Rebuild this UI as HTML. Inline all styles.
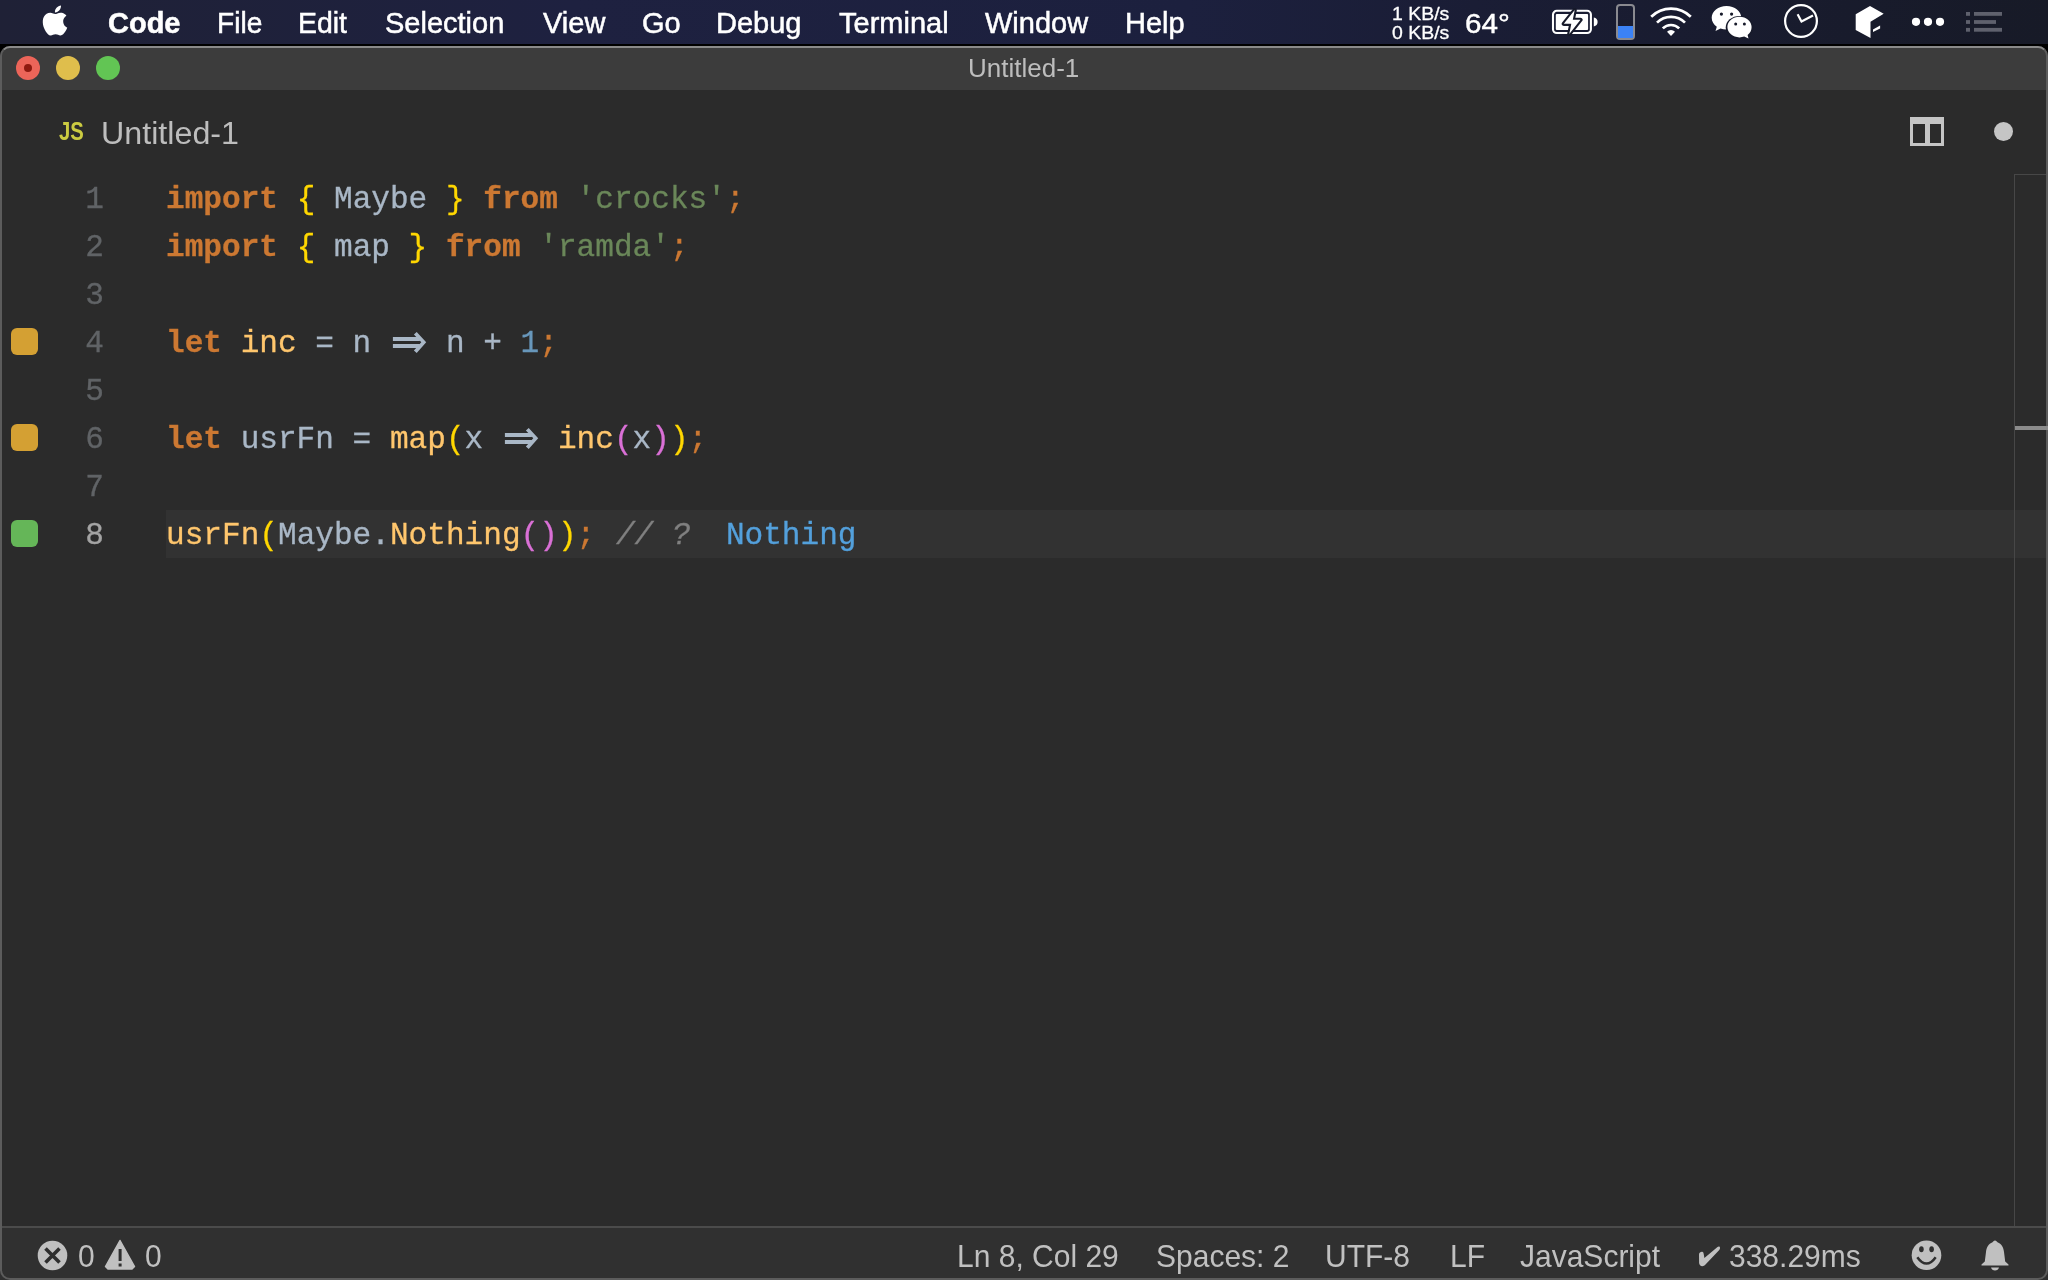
<!DOCTYPE html>
<html><head><meta charset="utf-8">
<style>
*{margin:0;padding:0;box-sizing:border-box}
html,body{width:2048px;height:1280px;overflow:hidden;background:#000}
body{position:relative;will-change:transform;font-family:"Liberation Sans",sans-serif}
.a{position:absolute;white-space:pre}
#menubar{position:absolute;left:0;top:0;width:2048px;height:44px;background:linear-gradient(90deg,#1f2136 0%,#1e2140 28%,#1c203e 58%,#1a1d35 72%,#171a27 100%)}
.mi{position:absolute;color:#fff;font-size:29px;line-height:29px;top:9px;transform-origin:0 0;-webkit-text-stroke:0.5px #fff}
#winbg{position:absolute;left:0;top:46px;width:2048px;height:1234px;border-radius:10px;background:#2b2b2b}
#winborder{position:absolute;left:0;top:46px;width:2048px;height:1234px;border:2px solid #5c5c5c;border-top-color:#8a8a8a;border-radius:10px}
#titlebar{position:absolute;left:0;top:46px;width:2048px;height:44px;background:#3c3c3c;border-radius:10px 10px 0 0}
.tl{position:absolute;border-radius:50%;width:24px;height:24px;top:10px}
.code{position:absolute;left:166px;font-family:"Liberation Mono",monospace;font-size:31.1px;line-height:48px;white-space:pre;color:#a9b7c6}
.ln{position:absolute;left:60px;width:44px;text-align:right;font-family:"Liberation Mono",monospace;font-size:31.1px;line-height:48px;color:#606366}
.k{color:#cc7832;font-weight:bold}
.f{color:#ffc66d}
.s{color:#6a8759}
.n{color:#6897bb}
.g{color:#ffd700}
.o{color:#da70d6}
.sc{color:#cc7832}
.cm{color:#808080;font-style:italic;position:relative;left:2px}
.q{color:#53a0dc}
.sb{position:absolute;color:#c0c0c0;font-size:30px;line-height:30px;top:1242px;transform-origin:0 25px;transform:scaleY(1.06)}
.sq{position:absolute;left:10.5px;width:27px;height:27.2px;border-radius:6px}
#curline{position:absolute;left:166px;top:510px;width:1880px;height:48px;background:#323232}
.ar{position:relative;display:inline-block;width:37.34px;color:transparent}
.ar svg{position:absolute;left:0;top:0px}
#ruler{position:absolute;left:2014px;top:175px;width:1px;height:1052px;background:#474747}
#rulertop{position:absolute;left:2014px;top:174px;width:34px;height:1px;background:#474747}
#rulermark{position:absolute;left:2015px;top:426px;width:33px;height:4px;background:#8b8b8b;z-index:5}
#statusbar{position:absolute;left:0;top:1226px;width:2048px;height:54px;background:#303030;border-top:2px solid #4b4b4b}
.cl{height:48px;transform:scaleY(1.02);transform-origin:0 32px;-webkit-text-stroke:0.3px currentColor}
</style></head><body>
<div id="menubar">
  <svg class="a" style="left:40px;top:4px" width="30" height="33" viewBox="0 0 24 24"><path fill="#fff" d="M12.152 6.896c-.948 0-2.415-1.078-3.96-1.04-2.04.027-3.91 1.183-4.961 3.014-2.117 3.675-.546 9.103 1.519 12.09 1.013 1.454 2.208 3.09 3.792 3.039 1.52-.065 2.09-.987 3.935-.987 1.831 0 2.35.987 3.96.948 1.637-.026 2.676-1.48 3.676-2.948 1.156-1.688 1.636-3.325 1.662-3.415-.039-.013-3.182-1.221-3.22-4.857-.026-3.04 2.48-4.494 2.597-4.559-1.429-2.09-3.623-2.324-4.39-2.376-2-.156-3.675 1.09-4.61 1.09zM15.53 3.83c.843-1.012 1.4-2.427 1.245-3.83-1.207.052-2.662.805-3.532 1.818-.78.896-1.454 2.338-1.273 3.714 1.338.104 2.715-.688 3.559-1.701"/></svg>
  <div class="mi" style="left:108px;font-weight:bold">Code</div>
  <div class="mi" style="left:217px;transform:scaleX(0.97)">File</div>
  <div class="mi" style="left:298px;transform:scaleX(0.98)">Edit</div>
  <div class="mi" style="left:385px">Selection</div>
  <div class="mi" style="left:543px">View</div>
  <div class="mi" style="left:642px">Go</div>
  <div class="mi" style="left:716px">Debug</div>
  <div class="mi" style="left:839px">Terminal</div>
  <div class="mi" style="left:985px">Window</div>
  <div class="mi" style="left:1125px">Help</div>
  <div class="a" style="left:1392px;top:5px;color:#fff;font-size:18px;line-height:19px;transform:scaleX(1.08);transform-origin:0 0;-webkit-text-stroke:0.3px #fff">1 KB/s<br>0 KB/s</div>
  <div class="a" style="left:1465px;top:9px;color:#fff;font-size:28px;line-height:30px;transform:scaleX(1.06);transform-origin:0 0;-webkit-text-stroke:0.4px #fff">64°</div>
<svg class="a" style="left:1550px;top:8px" width="50" height="28" viewBox="0 0 50 28"><rect x="3" y="2.8" width="37.9" height="22.2" rx="3.8" fill="none" stroke="#fff" stroke-width="2.1"/><rect x="5.8" y="5.9" width="32.3" height="16" rx="1" fill="#fff"/><path d="M43.8 9.6Q47.6 10.4 47.6 14Q47.6 17.6 43.8 18.4Z" fill="#fff"/><path d="M24.7 2.1L13.8 15.8H21.3L19.3 25.9L30.5 11.8H22.8Z" fill="#171a2a" stroke="#171a2a" stroke-width="4.2" stroke-linejoin="round"/><path d="M24.7 2.1L13.8 15.8H21.3L19.3 25.9L30.5 11.8H22.8Z" fill="#fff"/></svg>
<div class="a" style="left:1616px;top:4px;width:19px;height:36px;border:2px solid #8a8a90;border-radius:4px"><div style="position:absolute;left:0;right:0;bottom:0;height:12px;background:#3b82f6"></div></div>
<svg class="a" style="left:1648px;top:4px" width="46" height="36" viewBox="0 0 46 36"><g fill="none" stroke="#fff" stroke-width="2.7" stroke-linecap="butt"><path d="M3.2 12.8A28 28 0 0 1 42.8 12.8"/><path d="M9 18.6A19.8 19.8 0 0 1 37 18.6"/><path d="M14.8 24.4A11.6 11.6 0 0 1 31.2 24.4"/></g><path d="M19 27.7A5.6 5.6 0 0 1 27 27.7L23 32Z" fill="#fff"/></svg>
<svg class="a" style="left:1710px;top:4px" width="44" height="36" viewBox="0 0 44 36"><path d="M16.5 2C8.2 2 1.7 7.2 1.7 13.8C1.7 17.5 3.7 20.6 6.8 22.8L5.5 27L10.5 24.5C12.4 25.1 14.4 25.5 16.5 25.5C24.8 25.5 31.3 20.3 31.3 13.8C31.3 7.2 24.8 2 16.5 2Z" fill="#fff"/><ellipse cx="29.5" cy="23.5" rx="13.8" ry="11.6" fill="#171a2a"/><path d="M29.5 12.8C22.8 12.8 17.4 17.4 17.4 23.1C17.4 28.8 22.8 33.4 29.5 33.4C31.2 33.4 32.8 33.1 34.2 32.6L38.5 34.5L37.6 31C40.3 29.1 41.6 26.2 41.6 23.1C41.6 17.4 36.2 12.8 29.5 12.8Z" fill="#fff"/><circle cx="11.4" cy="10.1" r="1.6" fill="#171a2a"/><circle cx="21.6" cy="10.1" r="1.6" fill="#171a2a"/><circle cx="25.7" cy="20" r="1.5" fill="#171a2a"/><circle cx="34.4" cy="20" r="1.5" fill="#171a2a"/></svg>
<svg class="a" style="left:1782px;top:2px" width="38" height="38" viewBox="0 0 38 38"><circle cx="19" cy="19" r="15.9" fill="none" stroke="#fff" stroke-width="2.2"/><path d="M15.6 12.3L19.5 19.5L31 13.5" fill="none" stroke="#fff" stroke-width="2.2"/></svg>
<svg class="a" style="left:1852px;top:4px" width="36" height="36" viewBox="0 0 36 36"><path d="M18 2L31.7 9.7L18.5 17.8V34.1L3.7 26V10.2Z" fill="#fff"/><path d="M21 25.5L28.1 21.4V24.4L21 28Z" fill="#fff"/></svg>
<svg class="a" style="left:1910px;top:15px" width="36" height="14" viewBox="0 0 36 14"><circle cx="6" cy="6.8" r="4.1" fill="#fff"/><circle cx="18" cy="6.8" r="4.1" fill="#fff"/><circle cx="30" cy="6.8" r="4.1" fill="#fff"/></svg>
<svg class="a" style="left:1964px;top:10px" width="40" height="24" viewBox="0 0 40 24"><g fill="#5f616d"><rect x="2" y="2" width="4" height="3.8"/><rect x="2" y="10.1" width="4" height="3.8"/><rect x="2" y="17.9" width="4" height="3.8"/><rect x="10" y="2" width="28" height="3.8"/><rect x="10" y="10.1" width="22" height="3.8"/><rect x="10" y="17.9" width="28" height="3.8"/></g></svg>
</div>
<div id="winbg"></div>
<div id="titlebar"></div>
<div class="tl" style="left:16px;top:56px;background:#ec6559"><div style="position:absolute;left:8px;top:8px;width:8px;height:8px;border-radius:50%;background:#8e1a10"></div></div>
<div class="tl" style="left:56px;top:56px;background:#dfbe4c"></div>
<div class="tl" style="left:96px;top:56px;background:#62c554"></div>
<div class="a" style="left:968px;top:56px;color:#bdbdbd;font-size:25px;line-height:25px;transform:scaleX(1.04);transform-origin:0 0">Untitled-1</div>
<div class="a" style="left:59px;top:118px;color:#cbcb41;font-size:26px;font-weight:bold;line-height:26px;transform:scaleX(0.78);transform-origin:0 0">JS</div>
<div class="a" style="left:101px;top:118px;color:#bdbdbd;font-size:31px;line-height:31px;transform:scaleX(1.04);transform-origin:0 0">Untitled-1</div>
<div id="curline"></div>
<div class="code cl" style="top:176px"><span class="k">import</span> <span class="g">{</span> Maybe <span class="g">}</span> <span class="k">from</span> <span class="s">'crocks'</span><span class="sc">;</span></div>
<div class="code cl" style="top:224px"><span class="k">import</span> <span class="g">{</span> map <span class="g">}</span> <span class="k">from</span> <span class="s">'ramda'</span><span class="sc">;</span></div>
<div class="code cl" style="top:320px"><span class="k">let</span> <span class="f">inc</span> = n <span class="ar">=&gt;<svg width="38" height="48" viewBox="0 0 38 48"><rect x="2.9" y="17.29" width="27" height="3.92" fill="#a9b7c6"/><rect x="2.9" y="24.16" width="27" height="3.92" fill="#a9b7c6"/><path d="M26.7 12.29L36.2 22.39L26.7 32.88L23.9 30.43L31.3 22.39L23.9 14.74Z" fill="#a9b7c6"/></svg></span> n + <span class="n">1</span><span class="sc">;</span></div>
<div class="code cl" style="top:416px"><span class="k">let</span> usrFn = <span class="f">map</span><span class="g">(</span>x <span class="ar">=&gt;<svg width="38" height="48" viewBox="0 0 38 48"><rect x="2.9" y="17.29" width="27" height="3.92" fill="#a9b7c6"/><rect x="2.9" y="24.16" width="27" height="3.92" fill="#a9b7c6"/><path d="M26.7 12.29L36.2 22.39L26.7 32.88L23.9 30.43L31.3 22.39L23.9 14.74Z" fill="#a9b7c6"/></svg></span> <span class="f">inc</span><span class="o">(</span>x<span class="o">)</span><span class="g">)</span><span class="sc">;</span></div>
<div class="code cl" style="top:512px"><span class="f">usrFn</span><span class="g">(</span>Maybe.<span class="f">Nothing</span><span class="o">()</span><span class="g">)</span><span class="sc">;</span> <span class="cm">// ?</span>  <span class="q">Nothing</span></div>
<div class="ln cl" style="top:176px">1</div>
<div class="ln cl" style="top:224px">2</div>
<div class="ln cl" style="top:272px">3</div>
<div class="ln cl" style="top:320px">4</div>
<div class="ln cl" style="top:368px">5</div>
<div class="ln cl" style="top:416px">6</div>
<div class="ln cl" style="top:464px">7</div>
<div class="ln cl" style="top:512px;color:#a4a4a4">8</div>
<div class="sq" style="top:328.3px;background:#d4a033"></div>
<div class="sq" style="top:424.3px;background:#d4a033"></div>
<div class="sq" style="top:520.3px;background:#65b658"></div>
<div id="ruler"></div><div id="rulertop"></div><div id="rulermark"></div>
<div class="a" style="left:1910px;top:117px;width:34px;height:29px;border:3px solid #c5c5c5;border-top-width:7px"><div style="position:absolute;left:12px;top:0;width:5px;height:19px;background:#c5c5c5"></div></div>
<div class="a" style="left:1993.6px;top:121.6px;width:19.4px;height:19.4px;border-radius:50%;background:#c5c5c5"></div>
<div id="statusbar"></div>
<svg class="a" style="left:37px;top:1240px" width="31" height="31" viewBox="0 0 31 31"><circle cx="15.5" cy="15.5" r="14.8" fill="#c0c0c0"/><path d="M8.5 8.5L22.5 22.5M22.5 8.5L8.5 22.5" stroke="#2e2e2e" stroke-width="3.6"/></svg>
<div class="sb" style="left:78px">0</div>
<svg class="a" style="left:104px;top:1239px" width="32" height="32" viewBox="0 0 32 32"><path d="M16 1.5L30.5 27.5L28 30H4L1.5 27.5Z" fill="#c0c0c0" stroke="#c0c0c0" stroke-width="1.5" stroke-linejoin="round"/><rect x="14.6" y="10" width="3" height="12" fill="#2e2e2e"/><rect x="14.6" y="24.5" width="3" height="3" fill="#2e2e2e"/></svg>
<div class="sb" style="left:145px">0</div>
<div class="sb" style="left:957px">Ln 8, Col 29</div>
<div class="sb" style="left:1156px">Spaces: 2</div>
<div class="sb" style="left:1325px">UTF-8</div>
<div class="sb" style="left:1450px">LF</div>
<div class="sb" style="left:1520px">JavaScript</div>
<svg class="a" style="left:1696px;top:1244px" width="26" height="24" viewBox="0 0 26 24"><path d="M3 10.5C3 8.5 5 7.6 6.2 7.8C7.2 8 7.6 9 7.8 10.5L8.4 13.9L21.5 3C22.5 2.2 24 2.3 24 4C24 5 23.5 5.8 22.8 6.5L9.5 20.5C8.5 21.6 7.5 22.2 6.3 22.2C4.5 22.2 3.3 21 3.1 19Z" fill="#c0c0c0"/></svg>
<div class="sb" style="left:1729px">338.29ms</div>
<svg class="a" style="left:1911px;top:1239px" width="32" height="32" viewBox="0 0 32 32"><circle cx="15.5" cy="16.2" r="14.8" fill="#c0c0c0"/><ellipse cx="10.4" cy="10.2" rx="2.3" ry="3" fill="#2f2f2f"/><ellipse cx="20.6" cy="10.2" rx="2.3" ry="3" fill="#2f2f2f"/><path d="M6.3 18.2Q15.5 31 24.7 18.2" stroke="#2f2f2f" stroke-width="2.5" fill="none"/></svg>
<svg class="a" style="left:1980px;top:1239px" width="30" height="32" viewBox="0 0 30 32"><path d="M15 1.5C13.8 1.5 13 2.6 12.5 3.3C8.5 4.8 6.5 8.5 6 13L4.8 22.5L1.5 25.5V26.5H28.5V25.5L25.2 22.5L24 13C23.5 8.5 21.5 4.8 17.5 3.3C17 2.6 16.2 1.5 15 1.5Z" fill="#c0c0c0"/><path d="M11 28.5H19C18.5 30.5 17 31.5 15 31.5C13 31.5 11.5 30.5 11 28.5Z" fill="#c0c0c0"/></svg>
<div id="winborder"></div>
</body></html>
